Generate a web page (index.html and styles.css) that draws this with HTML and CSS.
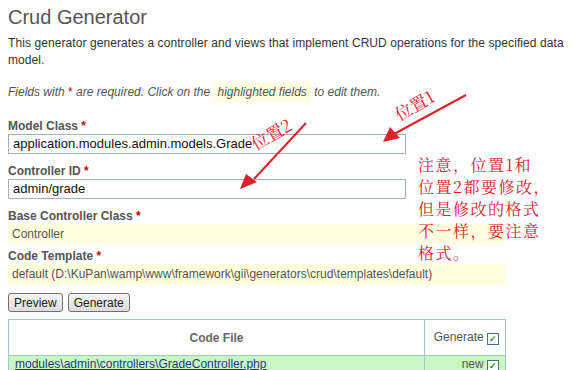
FILE: index.html
```html
<!DOCTYPE html>
<html lang="en">
<head>
    <meta charset="UTF-8">
    <title>Crud Generator</title>
    <link rel="stylesheet" href="styles.css">
</head>
<body>
    <div class="page">
        <h1>Crud Generator</h1>
        <p class="intro">This generator generates a controller and views that implement CRUD operations for the specified data model.</p>
        <p class="note">Fields with <span class="req">*</span> are required. Click on the <span class="hl">highlighted fields</span> to edit them.</p>

        <div class="row">
            <label>Model Class <span class="req">*</span></label>
            <div class="input">application.modules.admin.models.Grade</div>
        </div>
        <div class="row">
            <label>Controller ID <span class="req">*</span></label>
            <div class="input">admin/grade</div>
        </div>
        <div class="row">
            <label>Base Controller Class <span class="req">*</span></label>
            <div class="sticky">Controller</div>
        </div>
        <div class="row tight">
            <label>Code Template <span class="req">*</span></label>
            <div class="sticky">default (D:\KuPan\wamp\www\framework\gii\generators\crud\templates\default)</div>
        </div>

        <div class="buttons">
            <button>Preview</button>
            <button>Generate</button>
        </div>

        <table class="files">
            <tr class="head">
                <th class="file">Code File</th>
                <th class="gen">Generate <span class="check">&#10003;</span></th>
            </tr>
            <tr class="new">
                <td class="file"><a href="#">modules\admin\controllers\GradeController.php</a></td>
                <td class="gen">new <span class="check">&#10003;</span></td>
            </tr>
        </table>
    </div>

    <svg class="marks" width="579" height="370" viewBox="0 0 579 370">
        <g stroke="#e0202a" stroke-width="2" fill="#e0202a">
            <line x1="466" y1="95" x2="394" y2="134"/>
            <polygon points="383,142 390,127 400,138" stroke="none"/>
            <line x1="306" y1="123" x2="254" y2="179"/>
            <polygon points="240,189 246,174 257,182" stroke="none"/>
        </g>
    </svg>
    <div class="tag tag1">位置1</div>
    <div class="tag tag2">位置2</div>
    <div class="memo">注意，位置1和<br>位置2都要修改，<br>但是修改的格式<br>不一样，要注意<br>格式。</div>
</body>
</html>
```

FILE: styles.css
```css
body {
    margin: 0;
    background: #fff;
    font-family: Arial, "Liberation Sans", sans-serif;
    color: #333;
    overflow: hidden;
}

.page {
    padding: 0 8px;
    width: 497px;
}

h1 {
    margin: 0;
    padding-top: 5px;
    font-size: 20px;
    line-height: 24px;
    font-weight: normal;
    color: #555;
}

.intro {
    width: 563px;
    margin: 6px 0 0;
    font-size: 12px;
    line-height: 17px;
    letter-spacing: 0.08px;
}

.note {
    width: 563px;
    margin: 14px 0 0;
    font-size: 12px;
    line-height: 18px;
    font-style: italic;
    color: #555;
}

.hl {
    background: #ffffe0;
    padding: 3px 4px;
}

.req {
    color: #c00;
    font-style: normal;
}

.row {
    margin-top: 18px;
}

.row + .row {
    margin-top: 10px;
}

.row.tight {
    margin-top: 5px;
}

label {
    display: block;
    font-size: 12px;
    line-height: 15px;
    font-weight: bold;
    color: #555;
}

.input {
    width: 388px;
    height: 18px;
    margin-top: 0;
    padding: 0 4px;
    border: 1px solid #a5b1c0;
    font-size: 13px;
    line-height: 18px;
    color: #111;
}

.sticky {
    height: 20px;
    margin-top: 0;
    padding: 0 4px;
    background: #ffffe0;
    font-size: 12px;
    line-height: 20px;
    color: #555;
}

.row.tight .sticky {
    height: 21px;
    line-height: 21px;
}

.buttons {
    display: flex;
    gap: 5px;
    margin-top: 8px;
}

button {
    height: 19px;
    padding: 0 5px;
    border: 1px solid #707070;
    border-radius: 3px;
    background: linear-gradient(#f6f6f6, #dcdcdc);
    font-family: Arial, "Liberation Sans", sans-serif;
    font-size: 12px;
    color: #222;
}

.files {
    width: 498px;
    margin-top: 7px;
    border-collapse: collapse;
    font-size: 12px;
}

.files th,
.files td {
    border: 1px solid #9cc8d0;
    padding: 0 6px;
}

.head th {
    height: 35px;
    font-weight: bold;
    color: #666;
    font-size: 12px;
}

.head .gen {
    font-weight: normal;
    color: #555;
}

.files .gen {
    width: 68px;
    text-align: right;
    white-space: nowrap;
}

.new td {
    height: 16px;
    background: #c8f7c4;
    color: #555;
}

.new a {
    color: #223b7d;
}

.check {
    display: inline-block;
    width: 10px;
    height: 10px;
    border: 1px solid #4a6a8a;
    background: #fff;
    color: #2a8a2a;
    font-size: 9px;
    line-height: 10px;
    text-align: center;
    font-weight: bold;
    vertical-align: -1px;
}

.marks {
    position: absolute;
    top: 0;
    left: 0;
    pointer-events: none;
}

.tag {
    position: absolute;
    font-family: "Noto Serif CJK SC", "Noto Sans CJK SC", serif;
    font-size: 17px;
    color: #e0202a;
    transform: rotate(-30deg);
}

.tag1 {
    left: 393px;
    top: 92px;
}

.tag2 {
    left: 249px;
    top: 121px;
}

.memo {
    position: absolute;
    left: 418px;
    top: 154px;
    font-family: "Noto Serif CJK SC", "Noto Sans CJK SC", serif;
    font-size: 16px;
    line-height: 22px;
    letter-spacing: 1.5px;
    color: #e0202a;
}
```
